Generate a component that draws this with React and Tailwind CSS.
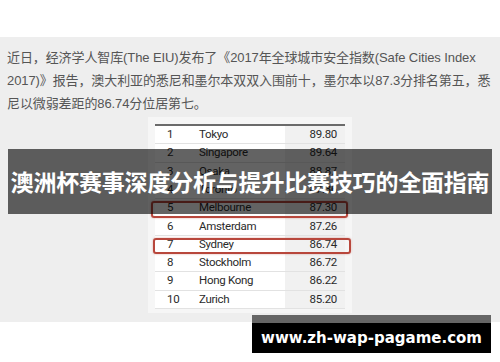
import React from 'react'

const rows = [
  { rank: '1', city: 'Tokyo', score: '89.80' },
  { rank: '2', city: 'Singapore', score: '89.64' },
  { rank: '3', city: 'Osaka', score: '88.87' },
  { rank: '4', city: 'Toronto', score: '87.36' },
  { rank: '5', city: 'Melbourne', score: '87.30' },
  { rank: '6', city: 'Amsterdam', score: '87.26' },
  { rank: '7', city: 'Sydney', score: '86.74' },
  { rank: '8', city: 'Stockholm', score: '86.72' },
  { rank: '9', city: 'Hong Kong', score: '86.22' },
  { rank: '10', city: 'Zurich', score: '85.20' },
]

const App = () => {
  return (
    <div className="relative w-[500px] h-[362px] bg-white overflow-hidden font-['Liberation_Sans','Noto_Sans_CJK_SC',sans-serif]">
      {/* top white strip */}
      <div className="h-[37px]"></div>

      {/* article area */}
      <div className="h-[285px] bg-[#eeeeee] pt-[9px]">
        <p className="px-[7px] text-[13px] leading-[23px] text-[#555555] whitespace-nowrap tracking-[-0.1px]">
          近日，经济学人智库(The EIU)发布了《2017年全球城市安全指数(Safe Cities Index<br />
          2017)》报告，澳大利亚的悉尼和墨尔本双双入围前十，墨尔本以87.3分排名第五，悉<br />
          尼以微弱差距的86.74分位居第七。
        </p>

        {/* ranking table picture */}
        <div className="relative ml-[148px] mt-[2px] w-[204px] h-[196px] bg-[#f6f6f6] px-[7px] pt-[7px]">
          <div className="h-[2px] bg-[#6b6b6b]"></div>
          <div className="flex flex-col font-['Roboto',sans-serif] text-[11.5px] tracking-[-0.3px] text-[#2a2a2a]">
            {rows.map((r) => (
              <div key={r.rank} className="flex h-[18.3px] items-center border-b border-[#e2e2e2]">
                <div className="flex h-full w-[130px] items-center bg-white">
                  <span className="w-[44px] pl-[12px]">{r.rank}</span>
                  <span>{r.city}</span>
                </div>
                <div className="flex h-full flex-1 items-center justify-end bg-[#f1f1f1] pr-[8px]">{r.score}</div>
              </div>
            ))}
          </div>

          {/* highlight boxes */}
          <div className="absolute left-[3px] top-[84px] w-[197px] h-[17px] rounded-[3px] border-2 border-[#b8473c] shadow-[0_0_2px_rgba(184,71,60,0.5)]"></div>
          <div className="absolute left-[5px] top-[121px] w-[198px] h-[16px] rounded-[3px] border-2 border-[#b8473c] shadow-[0_0_2px_rgba(184,71,60,0.5)]"></div>
        </div>
      </div>

      {/* title banner */}
      <div className="absolute left-[8px] top-[149px] w-[484px] h-[65px] flex items-center justify-center bg-[rgba(0,0,0,0.61)]">
        <h1 className="text-white text-[23px] font-bold tracking-[-0.2px] font-['Noto_Sans_CJK_SC',sans-serif]">
          澳洲杯赛事深度分析与提升比赛技巧的全面指南
        </h1>
      </div>

      {/* watermark */}
      <div className="absolute left-[252px] top-[315px] w-[239px] flex flex-col">
        <div className="h-[8px] bg-[#666666]"></div>
        <div className="h-[30px] bg-black flex items-center justify-center text-white text-[15px] font-bold font-['DejaVu_Sans',sans-serif]">
          www.zh-wap-pagame.com
        </div>
      </div>
    </div>
  )
}

export default App
